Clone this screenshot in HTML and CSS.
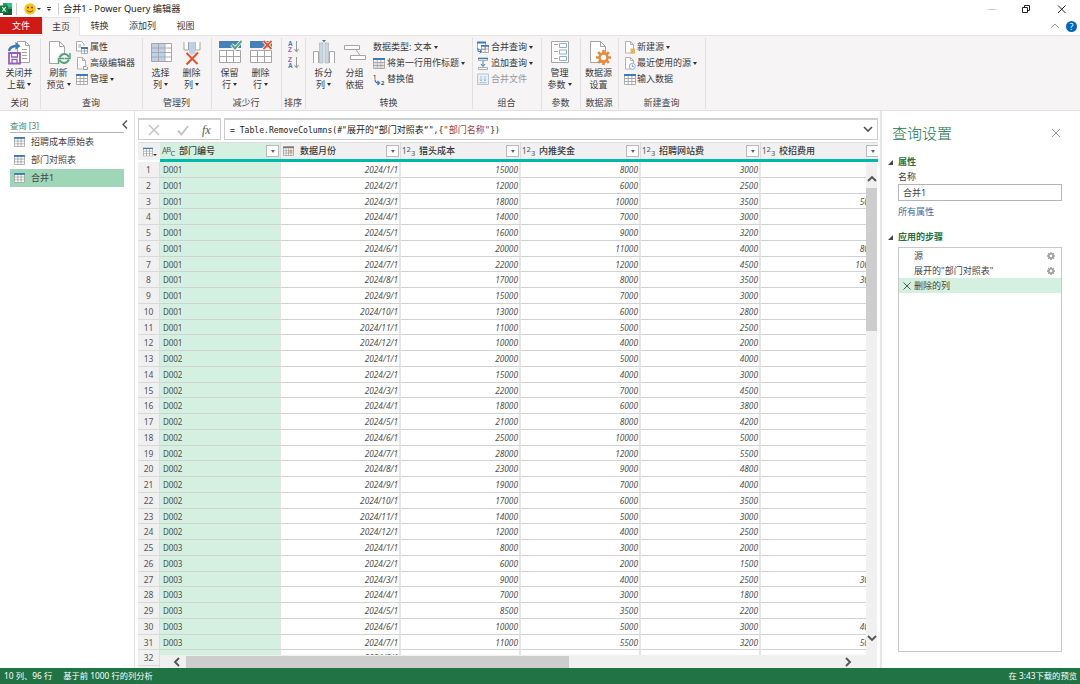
FILE: index.html
```html
<!DOCTYPE html>
<html lang="zh-CN">
<head>
  <meta charset="UTF-8" />
  <meta name="viewport" content="width=device-width, initial-scale=1" />
  <title>合并1 - Power Query 编辑器</title>
  <link rel="stylesheet" href="styles.css">
</head>
<body>
<svg class="defs">
  <symbol id="table" viewBox="0 0 12 11">
    <path d="M.5 1.5h11v9H.5zM.5 4.5h11M.5 7.5h11M4.2 2v8.500M7.800 2v8.500" fill="#fff" stroke="#999" stroke-width=".8"/>
    <path d="M0 0h12v2H0z" fill="#3d7ab8"/>
  </symbol>
  <symbol id="page" viewBox="0 0 12 13">
    <path d="M1.500.5h5l3 3v8.500h-8zM6.500.5v3h3" fill="#fff" stroke="#aaa" stroke-width=".9"/>
  </symbol>
  <symbol id="gear" viewBox="0 0 16 16">
    <path d="M8 0v16M0 8h16M2.300 2.300l11.400 11.400M13.700 2.300L2.300 13.700" stroke="currentColor" stroke-width="2.800"/>
    <circle cx="8" cy="8" r="4.200" fill="#fff" stroke="currentColor" stroke-width="2.600"/>
  </symbol>
  <symbol id="gridrows" viewBox="0 0 24 24">
    <path d="M1.500 10.500h21v12h-21zM1.500 16.500h21M8.500 10.500v12M15.500 10.500v12" fill="#fff" stroke="#a5a5a5"/>
    <path d="M1 1h22v7H1z" fill="#4680b8"/>
  </symbol>
</svg>

<div class="titlebar">
  <svg class="logo" viewBox="0 0 12 12"><path d="M3 0h9v12H3z" fill="#21a366"/><path d="M7 0h5v4H7z" fill="#33c481"/><path d="M3 6h9v6H3z" fill="#185c37"/><path d="M0 2.500h8v7.500H0z" fill="#107c41"/><path d="M2.300 4l3.400 4.500M5.700 4L2.300 8.500" stroke="#fff" stroke-width="1.200"/></svg>
  <i class="sep"></i>
  <svg class="smile" viewBox="0 0 12 12"><circle cx="6" cy="6" r="5.700" fill="#fcc21b"/><circle cx="4" cy="4.500" r=".9" fill="#5d4414"/><circle cx="8" cy="4.500" r=".9" fill="#5d4414"/><path d="M2.700 7.200q3.300 3.400 6.600 0" fill="none" stroke="#5d4414" stroke-width=".9"/></svg>
  <b class="arrow"></b>
  <b class="arrow bar"></b>
  <i class="sep"></i>
  <span class="title">合并1 - Power Query 编辑器</span>
  <svg class="winbtns" viewBox="0 0 90 16" fill="none"><path d="M8 8.500h8" stroke="#ccc"/><path d="M42.500 6.500h5v5h-5zM44.500 6V4.500h5v5H48" stroke="#222"/><path d="M78 4.500l7.500 7.500M85.500 4.500L78 12" stroke="#222"/></svg>
</div>

<div class="tabs">
  <span class="tab file">文件</span>
  <span class="tab active">主页</span>
  <span class="tab">转换</span>
  <span class="tab add">添加列</span>
  <span class="tab">视图</span>
  <svg class="collapse" viewBox="0 0 10 6"><path d="M1 5l4-4 4 4" fill="none" stroke="#999"/></svg>
  <span class="help">?</span>
</div>

<div class="ribbon">
  <div class="group g-close">
    <div class="items">
      <div class="big">
        <svg viewBox="0 0 24 26"><path d="M10.500 1.500h8l4 4v17h-12zM18.500 1.500v4h4M15 9.500h5M15 12.500h5M15 15.500h5M15 18.500h5" fill="#fff" stroke="#a5a5a5"/><path d="M2 11q1-5 8-5" fill="none" stroke="#3d7ab8" stroke-width="2.400"/><path d="M8.500 2l5 4-5 4z" fill="#3d7ab8"/><path d="M2 13h11v10.500H2z" fill="#fff" stroke="#9560b8" stroke-width="1.800"/><path d="M4.500 13v4h6v-4M5 23.500v-4h5v4" fill="none" stroke="#9560b8" stroke-width="1.300"/></svg>
        <span>关闭并</span><span>上载<b class="arrow"></b></span>
      </div>
    </div>
    <div class="name">关闭</div>
  </div>
  <div class="group g-query">
    <div class="items">
      <div class="big">
        <svg viewBox="0 0 24 26"><path d="M2.500 1.500h10l5 5v17h-15zM12.500 1.500v5h5" fill="#fff" stroke="#a5a5a5"/><path d="M11 13h12v11H11z" fill="#f6f4f5"/><path d="M12.500 17.500q2-4 5.500-3.500 2.500.3 4 3M22 19.500q-2 4-5.500 3.500-2.500-.3-4-3" fill="none" stroke="#5aa17c" stroke-width="1.900"/><path d="M23 13v5.500h-5.500M11.500 24v-5.500H17" fill="none" stroke="#5aa17c" stroke-width="1.500"/></svg>
        <span>刷新</span><span>预览<b class="arrow"></b></span>
      </div>
      <div class="smalls">
        <div><svg viewBox="0 0 12 13"><path d="M.5.5h5l2.500 2.500v7H.5zM2 4h3M2 6h3" fill="#fff" stroke="#aaa"/><path d="M5 5h7v8H5z" fill="#fff"/><path d="M5.500 7.500h6v5h-6zM5.500 10h6M8.500 7v6" fill="none" stroke="#999" stroke-width=".8"/><path d="M5 6h7v2H5z" fill="#3d7ab8"/></svg>属性</div>
        <div><svg viewBox="0 0 12 13"><use href="#page"/><path d="M7 8h5v5H7z" fill="#f6f4f5"/><path d="M7.500 12.500v-3h2.500v-1.500M8 12.500h3.500V10" fill="none" stroke="#888" stroke-width=".8"/></svg>高级编辑器</div>
        <div><svg viewBox="0 0 12 11"><use href="#table"/></svg>管理<b class="arrow"></b></div>
      </div>
    </div>
    <div class="name">查询</div>
  </div>
  <div class="group g-cols">
    <div class="items">
      <div class="big">
        <svg viewBox="0 0 24 26"><path d="M2.500 3.500h20v18h-20z" fill="#fff" stroke="#a5a5a5"/><path d="M3 4h13v17H3z" fill="#bdd2e8"/><path d="M2.500 8h20M2.500 12.500h20M2.500 17h20M9.500 3.500v18M16 3.500v18" stroke="#a5a5a5" stroke-width=".9"/></svg>
        <span>选择</span><span>列<b class="arrow"></b></span>
      </div>
      <div class="big">
        <svg viewBox="0 0 24 26"><path d="M4 2v8h4.500V2M20 2v8h-4.500V2" fill="#fff" stroke="#a5a5a5"/><path d="M9 2h6.500v11L12 15l-3-2z" fill="#bdd2e8"/><path d="M6.500 13l11 11M18 12.500L6.500 24.500" stroke="#e0512c" stroke-width="2"/></svg>
        <span>删除</span><span>列<b class="arrow"></b></span>
      </div>
    </div>
    <div class="name">管理列</div>
  </div>
  <div class="group g-rows">
    <div class="items">
      <div class="big">
        <svg viewBox="0 0 24 26"><use href="#gridrows" width="24" height="24"/><path d="M13.500 4.500l3.500 4L23.500 1" fill="none" stroke="#fff" stroke-width="3.500"/><path d="M13.500 4.500l3.500 4L23.500 1" fill="none" stroke="#5aa17c" stroke-width="2"/></svg>
        <span>保留</span><span>行<b class="arrow"></b></span>
      </div>
      <div class="big">
        <svg viewBox="0 0 24 26"><use href="#gridrows" width="24" height="24"/><path d="M14.500 1l8 8M22.500 1l-8 8" stroke="#fff" stroke-width="3.300"/><path d="M14.500 1l8 8M22.500 1l-8 8" stroke="#e0512c" stroke-width="1.800"/></svg>
        <span>删除</span><span>行<b class="arrow"></b></span>
      </div>
    </div>
    <div class="name">减少行</div>
  </div>
  <div class="group g-sort">
    <div class="items">
      <div class="sort"><p><em>A</em><em class="z">Z</em></p><svg viewBox="0 0 5 12"><path d="M2.500 0v10.500M.5 8l2 3 2-3" fill="none" stroke="#999"/></svg></div>
      <div class="sort"><p><em class="z">Z</em><em>A</em></p><svg viewBox="0 0 5 12"><path d="M2.500 0v10.500M.5 8l2 3 2-3" fill="none" stroke="#999"/></svg></div>
    </div>
    <div class="name">排序</div>
  </div>
  <div class="group g-trans">
    <div class="items">
      <div class="big">
        <svg viewBox="0 0 24 26"><path d="M1.500 23V11.500h5V23M17.500 23V11.500h5V23" fill="#fff" stroke="#a5a5a5"/><path d="M7.500 3h3.500v20H7.500zM13 3h3.500v20H13z" fill="#c5d8ea" stroke="#b5b5b5" stroke-width=".7"/><path d="M10 0h4l-2 2.500z" fill="#3d7ab8"/></svg>
        <span>拆分</span><span>列<b class="arrow"></b></span>
      </div>
      <div class="big">
        <svg viewBox="0 0 24 26"><path d="M1.500 5.500h15v4h-15zM7.500 15.500h15v4h-15zM13 9.500l4 6" fill="#fff" stroke="#a5a5a5"/></svg>
        <span>分组</span><span>依据</span>
      </div>
      <div class="smalls">
        <div>数据类型: 文本<b class="arrow"></b></div>
        <div><svg viewBox="0 0 12 11"><use href="#table"/><path d="M.5 6h11M.5 9h11M2.300 3v8M6 3v8M9.700 3v8" stroke="#aaa" stroke-width=".4"/></svg>将第一行用作标题<b class="arrow"></b></div>
        <div><svg viewBox="0 0 12 12"><text x="0" y="5" font-size="6">1</text><text x="8" y="11.500" font-size="6">2</text><path d="M2 6q0 3.500 4 3.500M4.500 7.500l2 2-2 2" fill="none" stroke="#3d7ab8" stroke-width="1.300"/></svg>替换值</div>
      </div>
    </div>
    <div class="name">转换</div>
  </div>
  <div class="group g-comb">
    <div class="items">
      <div class="smalls">
        <div><svg viewBox="0 0 12 13"><path d="M.5 1.500h8v7h-8zM4.500 4.500h7v7h-7zM4.500 8h7M8 5v6.500" fill="#fff" stroke="#999" stroke-width=".8"/><path d="M0 .5h9v2H0zM4 4h8v1.700H4z" fill="#3d7ab8"/><path d="M1 7v3.500h3M2.500 8.500l2 2-2 2" fill="none" stroke="#3d7ab8"/></svg>合并查询<b class="arrow"></b></div>
        <div><svg viewBox="0 0 12 13"><path d="M1.500 1.500h9v2h-9zM1.500 10.500h9v2h-9z" fill="#fff" stroke="#999" stroke-width=".8"/><path d="M1 .7h10v1.500H1z" fill="#3d7ab8"/><path d="M6 4v5M4 7l2 2.500L8 7" fill="none" stroke="#3d7ab8"/></svg>追加查询<b class="arrow"></b></div>
        <div class="off"><svg viewBox="0 0 12 13"><path d="M.5 1h11v10.500H.5z" fill="#eaf0f8" stroke="#b5c5dc"/><path d="M4 3v5M8 3v5M2.800 6.500L4 8l1.200-1.500M6.800 6.500L8 8l1.200-1.500M2.500 9.700h7" fill="none" stroke="#9bb0d0" stroke-width=".8"/></svg>合并文件</div>
      </div>
    </div>
    <div class="name">组合</div>
  </div>
  <div class="group g-param">
    <div class="items">
      <div class="big">
        <svg viewBox="0 0 24 26"><path d="M3.500 1.500h17v21h-17zM6 4.500h4M6 11.500h4M6 18.500h4" fill="#fff" stroke="#a5a5a5"/><path d="M11.500 3.500h7v4h-7zM11.500 10h7v4h-7zM11.500 16.500h7v4h-7z" fill="#fff" stroke="#8db0d4"/></svg>
        <span>管理</span><span>参数<b class="arrow"></b></span>
      </div>
    </div>
    <div class="name">参数</div>
  </div>
  <div class="group g-source">
    <div class="items">
      <div class="big">
        <svg viewBox="0 0 24 26"><path d="M3.500 1.500h10l5 5v16h-15zM13.500 1.500v5h5" fill="#fff" stroke="#a5a5a5"/><use href="#gear" x="9" y="10" width="15" height="15" color="#e98a3c"/></svg>
        <span>数据源</span><span>设置</span>
      </div>
    </div>
    <div class="name">数据源</div>
  </div>
  <div class="group g-new">
    <div class="items">
      <div class="smalls">
        <div><svg viewBox="0 0 12 13"><use href="#page"/><path d="M6.500 7.500h4.500v5H6.500z" fill="#e5b25d"/></svg>新建源<b class="arrow"></b></div>
        <div><svg viewBox="0 0 12 13"><use href="#page"/><circle cx="8.300" cy="9.300" r="3" fill="#fff" stroke="#8db0d4"/><path d="M8.300 7.500v2h1.500" fill="none" stroke="#3d7ab8" stroke-width=".7"/></svg>最近使用的源<b class="arrow"></b></div>
        <div><svg viewBox="0 0 12 11"><use href="#table"/></svg>输入数据</div>
      </div>
    </div>
    <div class="name">新建查询</div>
  </div>
</div>

<div class="main">
  <div class="queries">
    <div class="q-head"><span>查询 [3]</span><svg viewBox="0 0 6 9"><path d="M5 .5l-4 4 4 4" fill="none" stroke="#555" stroke-width="1.500"/></svg></div>
    <div class="q"><svg viewBox="0 0 12 11"><use href="#table"/></svg>招聘成本原始表</div>
    <div class="q"><svg viewBox="0 0 12 11"><use href="#table"/></svg>部门对照表</div>
    <div class="q selected"><svg viewBox="0 0 12 11"><use href="#table"/></svg>合并1</div>
  </div>

  <div class="center">
    <div class="formula">
      <div class="fx">
        <svg viewBox="0 0 60 16" fill="none"><path d="M10 3l10 10M20 3L10 13" stroke="#c4c4c4" stroke-width="1.500"/><path d="M39 8.500l3.500 4L49 4" stroke="#c4c4c4" stroke-width="2"/></svg>
        <em>fx</em>
      </div>
      <div class="code"><code>= Table.RemoveColumns(#"<span>展开的</span>“<span>部门对照表</span>“",{<span class="str">"部门名称"</span>})</code><svg viewBox="0 0 10 7"><path d="M1 1l4 4 4-4" fill="none" stroke="#555" stroke-width="1.700"/></svg></div>
    </div>
    <div class="heads">
      <div class="corner"><svg viewBox="0 0 12 11"><use href="#table"/></svg><b class="arrow"></b></div>
      <div class="cols">
        <div class="col key"><i class="type abc">A<sup>B</sup><sub>C</sub></i>部门编号<u><b class="arrow"></b></u></div>
        <div class="col"><svg class="cal" viewBox="0 0 12 11"><path d="M.5 1h11v9.500H.5zM.5 5.200h11M.5 7.800h11M3.300 3v7.500M6 3v7.500M8.700 3v7.500" fill="#fff" stroke="#999" stroke-width=".8"/><path d="M0 .5h12V2.500H0z" fill="#777"/><path d="M7 4.500h3v3H7z" fill="#ee9a55"/></svg>数据月份<u><b class="arrow"></b></u></div>
        <div class="col"><i class="type">1<sup>2</sup><sub>3</sub></i>猎头成本<u><b class="arrow"></b></u></div>
        <div class="col"><i class="type">1<sup>2</sup><sub>3</sub></i>内推奖金<u><b class="arrow"></b></u></div>
        <div class="col"><i class="type">1<sup>2</sup><sub>3</sub></i>招聘网站费<u><b class="arrow"></b></u></div>
        <div class="col last"><i class="type">1<sup>2</sup><sub>3</sub></i>校招费用<u><b class="arrow"></b></u></div>
      </div>
    </div>
    <div class="sheet">
      <div class="nums" id="nums"></div>
      <div class="cells" id="cells"></div>
      <div class="vscroll">
        <svg viewBox="0 0 10 7"><path d="M1 6l4-4 4 4" fill="none" stroke="#555" stroke-width="1.900"/></svg>
        <div class="thumb"></div>
        <svg class="down" viewBox="0 0 10 7"><path d="M1 1l4 4 4-4" fill="none" stroke="#555" stroke-width="1.900"/></svg>
      </div>
      <div class="hscroll">
        <svg viewBox="0 0 7 10"><path d="M6 1L2 5l4 4" fill="none" stroke="#555" stroke-width="1.900"/></svg>
        <div class="thumb"></div>
        <svg class="right" viewBox="0 0 7 10"><path d="M1 1l4 4-4 4" fill="none" stroke="#555" stroke-width="1.900"/></svg>
      </div>
    </div>
  </div>

  <div class="settings">
    <div class="s-head"><h1>查询设置</h1><svg viewBox="0 0 10 10"><path d="M1 1l8 8M9 1L1 9" stroke="#999"/></svg></div>
    <h2>属性</h2>
    <label>名称</label>
    <div class="input">合并1</div>
    <a>所有属性</a>
    <h2 class="steps-title">应用的步骤</h2>
    <div class="steps">
      <div class="step"><span>源</span><svg class="cog" viewBox="0 0 16 16"><use href="#gear"/></svg></div>
      <div class="step"><span>展开的"部门对照表"</span><svg class="cog" viewBox="0 0 16 16"><use href="#gear"/></svg></div>
      <div class="step selected"><svg class="del" viewBox="0 0 8 8"><path d="M.5.5l7 7M7.500.5l-7 7" stroke="#555"/></svg><span>删除的列</span></div>
    </div>
  </div>
</div>

<div class="status">
  <span>10 列、96 行</span><span>基于前 1000 行的列分析</span><span class="time">在 3:43下载的预览</span>
</div>

<script>
  // 猎头成本, 内推奖金, 招聘网站费, 校招费用
  const data = [
    [15000, 8000, 3000, ''], [12000, 6000, 2500, ''], [18000, 10000, 3500, 5000], [14000, 7000, 3000, ''],
    [16000, 9000, 3200, ''], [20000, 11000, 4000, 8000], [22000, 12000, 4500, 10000], [17000, 8000, 3500, 3000],
    [15000, 7000, 3000, ''], [13000, 6000, 2800, ''], [11000, 5000, 2500, ''], [10000, 4000, 2000, ''],
    [20000, 5000, 4000, ''], [15000, 4000, 3000, ''], [22000, 7000, 4500, ''], [18000, 6000, 3800, ''],
    [21000, 8000, 4200, ''], [25000, 10000, 5000, ''], [28000, 12000, 5500, ''], [23000, 9000, 4800, ''],
    [19000, 7000, 4000, ''], [17000, 6000, 3500, ''], [14000, 5000, 3000, ''], [12000, 4000, 2500, ''],
    [8000, 3000, 2000, ''], [6000, 2000, 1500, ''], [9000, 4000, 2500, 3000], [7000, 3000, 1800, ''],
    [8500, 3500, 2200, ''], [10000, 5000, 3000, 4000], [11000, 5500, 3200, 5000], ['', '', '', '']
  ];
  let nums = '';
  let cells = '';
  data.forEach((row, i) => {
    const dept = i < 31 ? 'D00' + (Math.floor(i / 12) + 1) : '';
    const month = '2024/' + (i % 12 + 1) + '/1';
    nums += `<div>${i + 1}</div>`;
    cells += `<div class="line"><div class="key">${dept}</div><div>${month}</div>`;
    cells += row.map(v => `<div>${v}</div>`).join('') + '</div>';
  });
  document.getElementById('nums').innerHTML = nums;
  document.getElementById('cells').innerHTML = cells;
</script>
</body>
</html>
```
FILE: styles.css
```css
* {
  box-sizing: border-box;
}
body {
  margin: 0;
  width: 1080px;
  height: 684px;
  overflow: hidden;
  display: flex;
  flex-direction: column;
  background: #fff;
  color: #3a3a3a;
  font: 9px/12px "Noto Sans", "Noto Sans CJK SC", sans-serif;
  white-space: nowrap;
}
svg {
  flex: none;
  display: block;
}
.defs {
  display: none;
}
.arrow {
  display: inline-block;
  border: 2.500px solid transparent;
  border-top: 3px solid #333;
  border-bottom: 0;
  margin-left: 2px;
  vertical-align: 2px;
}

/* title */
.titlebar {
  height: 17px;
  display: flex;
  align-items: center;
  color: #222;
}
.logo {
  width: 12px;
  height: 12px;
}
.sep {
  width: 1px;
  height: 12px;
  background: #ccc;
  margin-left: 4px;
}
.smile {
  width: 12px;
  height: 12px;
  margin-left: 7px;
}
.titlebar .arrow {
  border-width: 2px;
  border-bottom: 0;
  margin-left: 1px;
}
.titlebar .arrow.bar {
  margin: 3px 0 0 6px;
  position: relative;
}
.arrow.bar::before {
  content: "";
  position: absolute;
  width: 4px;
  height: 1px;
  left: -2px;
  top: -4px;
  background: #333;
}
.titlebar .bar + .sep {
  margin-left: 7px;
}
.title {
  margin-left: 4px;
  font-size: 9.200px;
}
.winbtns {
  width: 90px;
  height: 16px;
  margin-left: auto;
  margin-right: 10px;
}

/* tabs */
.tabs {
  height: 19px;
  display: flex;
  align-items: center;
  border-bottom: 1px solid #e5e3e4;
}
.tab {
  width: 43px;
  height: 18px;
  line-height: 18px;
  text-align: center;
}
.tab.file {
  width: 42px;
  height: 17px;
  align-self: flex-start;
  background: #d01a16;
  color: #fff;
}
.tab.active {
  width: 38px;
  height: 19px;
  background: #f6f4f5;
  border: 1px solid #e5e3e4;
  border-bottom: 0;
  margin-bottom: -1px;
}
.tab.active + .tab {
  width: 39px;
}
.tab.add {
  width: 47px;
}
.tab.add + .tab {
  width: 39px;
}
.collapse {
  width: 10px;
  height: 6px;
  margin-left: auto;
}
.help {
  width: 11px;
  height: 11px;
  border-radius: 50%;
  background: #0067c0;
  color: #fff;
  text-align: center;
  line-height: 11px;
  margin: 0 3px 0 6px;
}

/* ribbon */
.ribbon {
  height: 75px;
  display: flex;
  background: #f6f4f5;
  border-bottom: 1px solid #e2e0e1;
  padding-top: 2px;
}
.group {
  height: 71px;
  border-right: 1px solid #e2e0e1;
  display: flex;
  flex-direction: column;
  justify-content: space-between;
}
.items {
  display: flex;
}
.name {
  text-align: center;
  line-height: 13px;
  padding-right: 1px;
  color: #444;
}
.g-close { width: 41px; }
.g-query { width: 102px; }
.g-cols { width: 69px; }
.g-rows { width: 70px; }
.g-sort { width: 24px; }
.g-trans { width: 167px; }
.g-comb { width: 69px; }
.g-param { width: 39px; }
.g-source { width: 38px; }
.g-new { width: 87px; }
.big {
  width: 31px;
  display: flex;
  flex-direction: column;
  align-items: center;
  padding-top: 2px;
}
.big svg {
  width: 24px;
  height: 26px;
  margin-bottom: 1px;
}
.g-close .big {
  width: 38px;
}
.g-param .big,
.g-source .big {
  width: 35px;
}
.g-query .big { width: 35px; }
.g-cols .items,
.g-trans .items { padding-left: 2px; }
.g-rows .items { padding-left: 2px; }
.smalls {
  padding-top: 1px;
}
.smalls div {
  height: 16px;
  display: flex;
  align-items: center;
}
.smalls svg {
  width: 12px;
  height: 13px;
  margin-right: 2px;
}
.g-trans .smalls {
  padding-left: 3px;
}
.g-comb .smalls {
  padding-left: 4px;
}
.g-new .smalls {
  padding-left: 5px;
}
.g-new .smalls svg {
  margin-right: 1px;
}
.off {
  color: #999;
}
.g-sort .items {
  flex-direction: column;
  gap: 4px;
  padding: 3px 0 0 6px;
}
.sort {
  display: flex;
  align-items: center;
  gap: 1px;
}
.sort p {
  margin: 0;
}
.sort em {
  display: block;
  font: bold 6.500px/6px "Liberation Sans", sans-serif;
  color: #3d7ab8;
}
.sort em.z {
  color: #9560b8;
}
.sort svg {
  width: 5px;
  height: 12px;
}

/* queries */
.main {
  height: 557px;
  display: flex;
}
.queries {
  width: 135px;
  border-right: 1px solid #e2e2e2;
  padding: 9px 0 0 10px;
  color: #444;
}
.q-head {
  display: flex;
  justify-content: space-between;
  height: 13px;
  width: 118px;
  color: #4a8a68;
  font-size: 8.300px;
  background: linear-gradient(#b5b5b5, #b5b5b5) 0 100% / 114px 1px no-repeat;
}
.q-head svg {
  width: 6px;
  height: 9px;
}
.q {
  width: 114px;
  height: 18px;
  display: flex;
  align-items: center;
}
.q svg {
  width: 11px;
  height: 10px;
  margin: 0 6px 0 4px;
}
.q.selected {
  background: #9fd6b7;
}

/* formula bar */
.center {
  width: 745px;
  padding: 7px 2px 0 3px;
}
.formula {
  display: flex;
  gap: 3px;
  height: 22px;
}
.fx,
.code {
  border: 1px solid #ccc;
  border-top: 2px solid #d0d0d0;
  display: flex;
  align-items: center;
}
.fx {
  width: 83px;
}
.fx svg {
  width: 60px;
  height: 16px;
}
.fx em {
  font: italic 12px/14px "Liberation Serif", serif;
  color: #555;
  margin-left: 3px;
}
.code {
  flex: 1;
  padding: 0 4px 0 5px;
  justify-content: space-between;
}
code {
  font: 8.100px/14px "DejaVu Sans Mono", "Noto Sans CJK SC", monospace;
  color: #222;
}
code span {
  font-family: "DejaVu Sans Mono", "Noto Sans CJK SC", monospace;
  font-size: 9px;
}
.str {
  color: #a33c3c;
}
.code svg {
  width: 10px;
  height: 7px;
}

/* column heads */
.heads {
  height: 20px;
  margin-top: 2px;
  display: flex;
  border-top: 1px solid #ddd;
}
.corner {
  width: 22px;
  height: 17px;
  background: #f0f0f0;
  display: flex;
  align-items: center;
  padding-left: 5px;
}
.corner svg {
  width: 10px;
  height: 10px;
}
.corner .arrow {
  margin: 6px 0 0 0;
  border-width: 2px;
  border-bottom: 0;
}
.cols {
  width: 718px;
  display: flex;
  overflow: hidden;
  border-bottom: 3px solid #01b8aa;
}
.col {
  width: 120px;
  flex: none;
  display: flex;
  align-items: center;
  background: #f0f0f0;
  border-right: 1px solid #d9d9d9;
  padding-left: 1px;
  font-weight: 500;
}
.col.key {
  width: 121px;
  padding-left: 2px;
  background: #d3f0e0;
}
.type {
  width: 17px;
  font: 8px/12px "Noto Sans", sans-serif;
  color: #555;
}
.type sup,
.type sub {
  font-size: 7.500px;
  line-height: 0;
}
.type sup { vertical-align: 2px; }
.type sub { vertical-align: -2px; }
.type.abc { letter-spacing: -.8px; }
.cal {
  width: 11px;
  height: 10px;
  margin: 0 6px 0 1px;
}
.col u {
  width: 13px;
  height: 12px;
  border: 1px solid #bbb;
  background: #fff;
  margin: 0 1px 0 auto;
  display: flex;
  align-items: center;
  justify-content: center;
}
.col u .arrow {
  margin: 0;
  border-top-color: #666;
}

/* sheet */
.sheet {
  height: 506px;
  display: grid;
  grid-template-columns: 22px 706px 11px;
  grid-template-rows: 493px 13px;
}
.nums {
  grid-row: 1 / 3;
  overflow: hidden;
  background: #f0f0f0;
  border-right: 1px solid #ddd;
  text-align: center;
  font-size: 8.500px;
  color: #555;
}
.nums div {
  height: 15.750px;
  line-height: 15px;
  border-bottom: 1px solid #d9d9d9;
}
.cells {
  overflow: hidden;
}
.line {
  height: 15.750px;
  width: 721px;
  display: flex;
}
.line div {
  width: 120px;
  border-right: 2px solid #e6e6e6;
  border-bottom: 1px solid #d2d2d2;
  padding-right: 1px;
  text-align: right;
  font-style: italic;
  font-size: 8.300px;
  line-height: 15px;
  color: #505050;
}
.line .key {
  width: 121px;
  border-right-width: 1px;
  text-align: left;
  font-style: normal;
  font-size: 8.100px;
  letter-spacing: -.1px;
  padding-left: 3px;
  background: #d3f0e0;
}
.vscroll {
  background: #f0f0f0;
  display: flex;
  flex-direction: column;
  align-items: center;
  padding: 13px 0;
}
.vscroll svg {
  width: 10px;
  height: 7px;
}
.vscroll .thumb {
  width: 11px;
  height: 143px;
  margin-top: 6px;
  background: #cdcdcd;
}
.vscroll .down {
  margin-top: auto;
}
.hscroll {
  grid-column: 2 / 4;
  background: #f0f0f0;
  display: flex;
  align-items: center;
  padding: 0 25px 0 13px;
}
.hscroll svg {
  width: 7px;
  height: 10px;
}
.hscroll .thumb {
  width: 383px;
  height: 12px;
  margin-left: 6px;
  background: #cdcdcd;
}
.hscroll .right {
  margin-left: auto;
}

/* settings */
.settings {
  flex: 1;
  border-left: 2px solid #e6e6e6;
  padding: 10px 18px 0 10px;
  color: #444;
}
.s-head {
  display: flex;
  justify-content: space-between;
  align-items: center;
  height: 23px;
}
h1 {
  margin: 0;
  font-size: 15px;
  line-height: 20px;
  font-weight: 300;
  color: #217346;
}
.s-head svg {
  width: 10px;
  height: 10px;
  margin-right: 1px;
}
h2 {
  margin: 11px 0 2px -4px;
  font-size: 9px;
  line-height: 14px;
  color: #217346;
  display: flex;
  align-items: center;
  gap: 5px;
}
h2::before {
  content: "";
  border-left: 5px solid transparent;
  border-bottom: 5px solid #444;
}
label,
.input,
a {
  display: block;
  margin-left: 6px;
}
.input {
  height: 17px;
  border: 1px solid #b5b5b5;
  padding-left: 4px;
  line-height: 15px;
  margin-top: 1px;
}
a {
  margin-top: 5px;
  color: #3a6ea5;
}
.steps-title {
  margin-top: 12px;
}
.steps {
  margin: 3px 0 0 6px;
  height: 405px;
  border: 1px solid #c9c9c9;
}
.step {
  height: 15px;
  display: flex;
  align-items: center;
  padding: 0 6px 0 15px;
  justify-content: space-between;
}
.cog {
  width: 8px;
  height: 8px;
  color: #999;
}
.step.selected {
  background: #d3f0e0;
  justify-content: flex-start;
  padding-left: 4px;
}
.del {
  width: 8px;
  height: 8px;
  margin-right: 3px;
}

/* status */
.status {
  height: 16px;
  background: #217346;
  color: #fff;
  display: flex;
  align-items: center;
  gap: 11px;
  padding: 0 3px 0 4px;
  font-size: 8.300px;
}
.time {
  margin-left: auto;
}
```
